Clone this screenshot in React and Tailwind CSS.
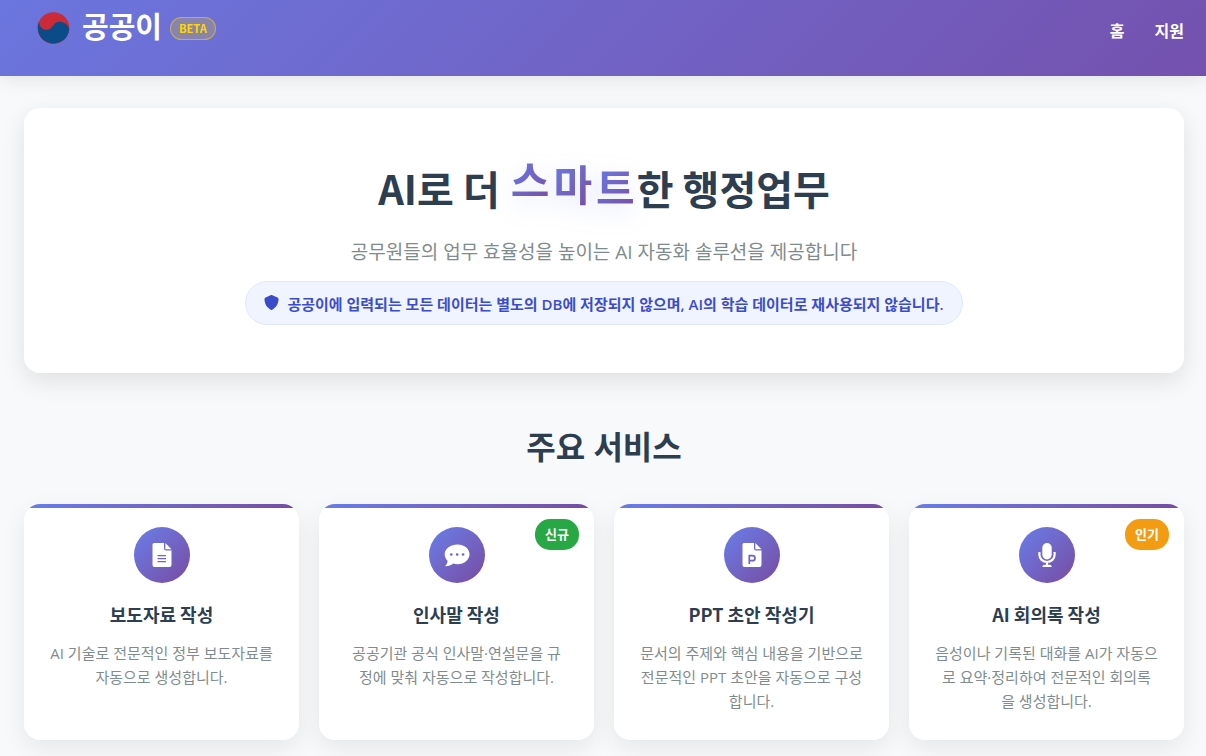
import { FaShield } from "react-icons/fa6";

const services = [
  {
    title: "보도자료 작성",
    description: "AI 기술로 전문적인 정부 보도자료를\n자동으로 생성합니다.",
    icon: DocumentIcon,
  },
  {
    title: "인사말 작성",
    description: "공공기관 공식 인사말·연설문을 규\n정에 맞춰 자동으로 작성합니다.",
    icon: ChatIcon,
    badge: "신규",
    badgeColor: "bg-[#28a745]",
  },
  {
    title: "PPT 초안 작성기",
    description:
      "문서의 주제와 핵심 내용을 기반으로\n전문적인 PPT 초안을 자동으로 구성\n합니다.",
    icon: SlidesIcon,
  },
  {
    title: "AI 회의록 작성",
    description:
      "음성이나 기록된 대화를 AI가 자동으\n로 요약·정리하여 전문적인 회의록\n을 생성합니다.",
    icon: MicIcon,
    badge: "인기",
    badgeColor: "bg-[#f39c12]",
  },
];

// letters of the highlighted word, each at its own height in the wave
const waveLetters = [
  { char: "스", className: "-translate-y-2" },
  { char: "마", className: "-translate-y-1" },
  { char: "트", className: "-translate-y-px" },
];

export default function App() {
  return (
    <div className="min-h-screen bg-[#f8f9fb] font-['Open_Sans','Noto_Sans_CJK_KR',sans-serif] text-[#2c3e50]">
      <Header />
      <main className="pt-8 pb-4 pl-6 pr-[22px]">
        <Hero />
        <section>
          <h2 className="mt-12 mb-8 text-center text-[32px] leading-[51px] font-bold">
            주요 서비스
          </h2>
          <div className="grid grid-cols-4 gap-5">
            {services.map((service) => (
              <ServiceCard key={service.title} {...service} />
            ))}
          </div>
        </section>
      </main>
    </div>
  );
}

function Header() {
  return (
    <header className="relative flex h-19 items-start justify-between bg-linear-135 from-[#6a76de] to-[#7451ae] pr-[22px] pl-9 text-white shadow-[0_2px_20px_rgba(0,0,0,0.1)]">
      <a href="#" className="flex h-14 items-center">
        <Taegeuk />
        <span className="ml-2.5 pb-1 text-[29px] leading-none font-bold">
          공공이
        </span>
        <span className="ml-2 rounded-full border border-[#ffd700]/50 bg-[#ffd700]/20 px-2 font-['Noto_Sans_CJK_KR',sans-serif] text-[11px] leading-[21px] font-bold text-[#ffd700]">
          BETA
        </span>
      </a>
      <nav className="flex h-[61px] items-center gap-[30px] text-base font-semibold">
        <a href="#home">홈</a>
        <a href="#support">지원</a>
      </nav>
    </header>
  );
}

function Taegeuk() {
  return (
    <svg viewBox="0 0 36 36" className="size-9" aria-hidden="true">
      <circle cx="17.5" cy="18" r="15.8" fill="#cb2a36" />
      <path
        d="M3 11.5C3 17 7 20.5 11.5 19.8C17 19 17 12.500 22.500 11.800C28 11 32.500 15 33.200 19.500A15.800 15.800 0 1 1 3 11.500Z"
        fill="#0a4c88"
      />
    </svg>
  );
}

function Hero() {
  return (
    <section className="flex flex-col items-center rounded-2xl bg-white py-12 text-center shadow-[0_8px_24px_rgba(0,0,0,0.1)]">
      <h1 className="font-['Noto_Sans_CJK_KR',sans-serif] text-[40px] leading-16 font-bold">
        AI로 더{" "}
        <span className="drop-shadow-[0_8px_12px_rgba(102,126,234,0.2)]">
          {waveLetters.map(({ char, className }) => (
            <span
              key={char}
              className={`inline-block bg-linear-135 from-[#667eea] to-[#764ba2] bg-clip-text px-0.5 text-[42px] leading-12 text-transparent ${className}`}
            >
              {char}
            </span>
          ))}
        </span>
        한 행정업무
      </h1>
      <p className="mt-4 text-[19px] leading-8 text-[#7f8c8d]">
        공무원들의 업무 효율성을 높이는 AI 자동화 솔루션을 제공합니다
      </p>
      <p className="mt-[13px] flex items-center gap-2 rounded-full border border-[#e0e7ff] bg-[#f0f4ff] px-[18px] pt-2.5 pb-2 text-[15px] leading-6 font-semibold text-[#3b4cca]">
        <FaShield className="mb-1 size-[15px]" />
        공공이에 입력되는 모든 데이터는 별도의 DB에 저장되지 않으며, AI의 학습
        데이터로 재사용되지 않습니다.
      </p>
    </section>
  );
}

function ServiceCard({ title, description, icon: Icon, badge, badgeColor }) {
  return (
    <article className="relative overflow-hidden rounded-2xl bg-white text-center shadow-[0_8px_24px_rgba(0,0,0,0.08)]">
      <div className="h-1 bg-linear-to-r from-[#667eea] to-[#764ba2]" />
      {badge && (
        <span
          className={`absolute top-[15px] right-[15px] rounded-[15px] px-2.5 text-[13px] leading-[31px] font-semibold text-white ${badgeColor}`}
        >
          {badge}
        </span>
      )}
      <div className="flex flex-col items-center px-5 pt-[19px] pb-[27px]">
        <div className="flex size-14 items-center justify-center rounded-full bg-linear-135 from-[#667eea] to-[#764ba2] text-white">
          <Icon />
        </div>
        <h3 className="mt-4 font-['Noto_Sans_CJK_KR',sans-serif] text-lg leading-[30px] font-semibold">
          {title}
        </h3>
        <p className="mt-3 text-[15px] leading-6 whitespace-pre-line text-[#7f8c8d]">
          {description}
        </p>
      </div>
    </article>
  );
}

function PageShape() {
  return (
    <>
      <path
        d="M4 0H14V5.500A2 2 0 0 0 16 7.500H21.500V22A2 2 0 0 1 19.500 24H4.500A2 2 0 0 1 2.500 22V1.500A1.500 1.500 0 0 1 4 0Z"
        fill="currentColor"
      />
      <path d="M15.300 0L21.500 6.200H15.300Z" fill="currentColor" />
    </>
  );
}

function DocumentIcon() {
  return (
    <svg viewBox="0 0 24 24" className="size-6" aria-hidden="true">
      <PageShape />
      <path
        d="M7.500 12.700H16M7.500 15.700H16M7.500 18.700H16"
        stroke="#6f62c4"
        strokeWidth="1.200"
      />
    </svg>
  );
}

function SlidesIcon() {
  return (
    <svg viewBox="0 0 24 24" className="size-6" aria-hidden="true">
      <PageShape />
      <path
        d="M9.300 21V12.700H12.500A2.500 2.500 0 0 1 12.500 17.700H9.300"
        fill="none"
        stroke="#6f62c4"
        strokeWidth="1.700"
      />
    </svg>
  );
}

function ChatIcon() {
  return (
    <svg viewBox="0 0 26 24" className="h-6 w-[26px]" aria-hidden="true">
      <path
        d="M13.500 1.500C20.400 1.500 25.500 5.800 25.500 11.300S20.400 21.200 13.500 21.200C12 21.200 10.500 21 9.200 20.600C7 22.400 4.200 23.300 1 23.200C2.700 21.600 3.600 19.800 3.500 17.800C1.700 16 .7 13.800 .7 11.300C.7 5.800 6.500 1.500 13.500 1.500Z"
        fill="currentColor"
      />
      <g fill="#6f62c4">
        <circle cx="7.300" cy="11.500" r="1.300" />
        <circle cx="13.200" cy="11.500" r="1.300" />
        <circle cx="19.100" cy="11.500" r="1.300" />
      </g>
    </svg>
  );
}

function MicIcon() {
  return (
    <svg viewBox="0 0 24 24" className="size-6" aria-hidden="true">
      <rect x="7.300" width="9.400" height="16.500" rx="4.700" fill="currentColor" />
      <path
        d="M4.400 9V11.800A7.600 7.200 0 0 0 19.600 11.800V9M12 19V23"
        fill="none"
        stroke="currentColor"
        strokeWidth="2.200"
      />
      <path d="M7.300 24Q7.300 21.800 9.500 21.800H14.500Q16.700 21.800 16.700 24Z" fill="currentColor" />
    </svg>
  );
}
